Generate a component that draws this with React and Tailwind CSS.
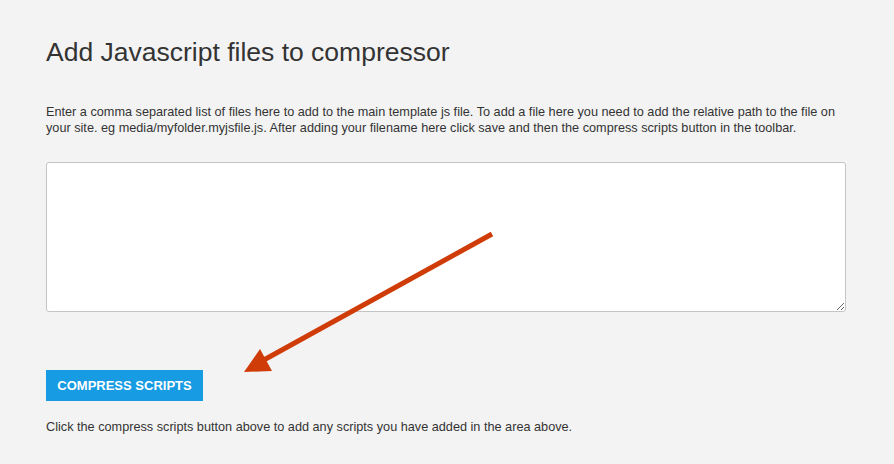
import React from "react";

export default function App() {
  return (
    <div
      className="relative min-h-[464px] bg-[#f3f3f3] pl-[46px] pr-[48px] text-[#333333]"
      style={{ fontFamily: '"Liberation Sans", Arial, sans-serif' }}
    >
      <h1 className="pt-[37px] text-[26.5px] leading-[30px] font-normal text-[#333333]">
        Add Javascript files to compressor
      </h1>
      <p className="mt-[37px] w-[800px] text-[12.7px] leading-[16px] text-[#333333]">
        Enter a comma separated list of files here to add to the main template js file. To add a file here you need to add the relative path to the file on your site. eg media/myfolder.myjsfile.js. After adding your filename here click save and then the compress scripts button in the toolbar.
      </p>
      <textarea className="mt-[26px] block h-[150px] w-[800px] rounded-[3px] border border-[#c4c4c4] bg-white p-2 text-[13px] outline-none"></textarea>
      <button className="mt-[58px] block h-[31px] w-[157px] bg-[#179be2] text-[13px] font-bold text-white">
        COMPRESS SCRIPTS
      </button>
      <p className="mt-[18px] text-[12.7px] leading-[16px] text-[#333333]">
        Click the compress scripts button above to add any scripts you have added in the area above.
      </p>
      <svg
        className="pointer-events-none absolute left-0 top-0"
        width="894"
        height="464"
        viewBox="0 0 894 464"
      >
        <line x1="492" y1="234" x2="262" y2="361" stroke="#d03c08" strokeWidth="5" />
        <polygon points="244,372 260,349 272,371" fill="#d03c08" />
      </svg>
    </div>
  );
}
